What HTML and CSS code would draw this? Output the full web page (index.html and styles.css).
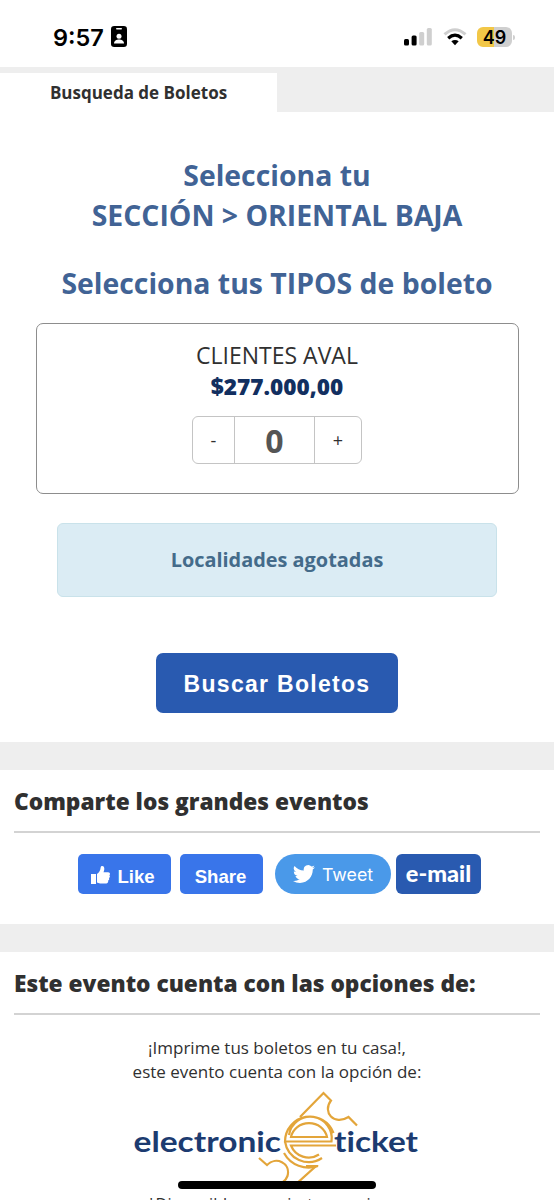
FILE: index.html
```html
<!DOCTYPE html>
<html lang="es">
<head>
<meta charset="utf-8">
<title>Busqueda de Boletos</title>
<link rel="stylesheet" href="styles.css">
</head>
<body>
<header class="status">
  <div class="status-left">
    <span class="clock">9:57</span>
    <svg class="badge" width="16" height="21" viewBox="0 0 16 21"><rect width="16" height="21" rx="3.2"/><rect x="5" y="2" width="6" height="1.6" rx=".8" fill="#fff"/><circle cx="8" cy="10.3" r="2.5" fill="#fff"/><path d="M3 17.6c0-5.4 10-5.4 10 0z" fill="#fff"/></svg>
  </div>
  <div class="status-right">
    <svg width="28" height="18" viewBox="0 0 28 18"><rect x="0" y="11" width="5" height="6.5" rx="1.5"/><rect x="7.6" y="7.5" width="5" height="10" rx="1.5"/><rect x="15.2" y="4" width="5" height="13.5" rx="1.5" fill="#cfcfcf"/><rect x="22.8" y="0" width="5" height="17.5" rx="1.5" fill="#cfcfcf"/></svg>
    <svg width="24" height="18" viewBox="0 0 24 18" fill="none"><path d="M1.500 6.400Q12-3 22.500 6.400" stroke="#cfcfcf" stroke-width="3"/><path d="M5.200 10.200Q12 4.200 18.800 10.200" stroke="#000" stroke-width="3.200"/><path d="M8.300 13.300Q12 10.500 15.700 13.300L12 17.300z" fill="#000"/></svg>
    <div class="battery"><span>49</span></div>
    <i class="battery-tip"></i>
  </div>
</header>
<nav class="tabs"><a class="tab">Busqueda de Boletos</a></nav>
<main class="search">
  <h1>Selecciona tu<br><span class="section-name">SECCIÓN &gt; ORIENTAL BAJA</span></h1>
  <h2>Selecciona tus TIPOS de boleto</h2>
  <section class="ticket">
    <div class="ticket-name">CLIENTES AVAL</div>
    <div class="price">$277.000,00</div>
    <div class="stepper"><button>-</button><output>0</output><button>+</button></div>
  </section>
  <div class="alert">Localidades agotadas</div>
  <button class="submit">Buscar Boletos</button>
</main>
<section class="share">
  <h3>Comparte los grandes eventos</h3>
  <div class="share-row">
    <a class="fb like"><svg width="19" height="20" viewBox="0 0 19 20" fill="#fff"><path d="M0 9h5v10H0zM6 9C8.300 7.500 9.300 5.500 9.700 2.300 9.900.4 13.300.3 13.300 3.500c0 1.700-.4 2.700-.8 3.700h4.600c2.100 0 2.400 2.400 1.200 3.100 1 .8.700 2.300-.4 2.700.7 1 .2 2.300-.8 2.600.4 1.300-.3 2.800-1.900 2.800H9.200c-1.600 0-2.200-.4-3.200-.8z"/></svg><span>Like</span></a>
    <a class="fb share-btn"><span>Share</span></a>
    <a class="tweet"><svg width="22" height="22" viewBox="0 0 24 24" fill="#fff"><path d="M23.950 4.570a10 10 0 0 1-2.820.770 4.960 4.960 0 0 0 2.160-2.720c-.95.550-2 .960-3.120 1.180a4.920 4.920 0 0 0-8.380 4.480C7.690 8.090 4.070 6.130 1.640 3.160a4.920 4.920 0 0 0 1.520 6.570 4.900 4.900 0 0 1-2.230-.610v.060a4.920 4.920 0 0 0 3.950 4.830 5 5 0 0 1-2.210.080 4.940 4.940 0 0 0 4.600 3.420A9.870 9.870 0 0 1 0 19.540a13.990 13.990 0 0 0 7.550 2.210c9.050 0 14-7.500 14-13.990 0-.210 0-.420-.020-.630a9.940 9.940 0 0 0 2.460-2.550z"/></svg><span>Tweet</span></a>
    <a class="email">e-mail</a>
  </div>
</section>
<section class="options">
  <h3>Este evento cuenta con las opciones de:</h3>
  <p class="print">¡Imprime tus boletos en tu casa!,<br>este evento cuenta con la opción de:</p>
  <svg class="logo" width="290" height="100" viewBox="132 1088 290 100">
    <g fill="none" stroke="#e3a53a" stroke-width="2.200">
      <path d="M300 1117L323.500 1093 331 1100.500C322 1112 334 1126 348.500 1117L357 1125.500"/>
      <path d="M259 1158L267 1165C276 1156 291 1163 287.500 1176Q286 1180 283 1182M290 1189.500L316 1166H306"/>
      <path d="M333.500 1133A25 25 0 0 0 285 1141.500H331.500A21.300 21.300 0 0 0 289 1135"/>
      <path d="M285 1141.500A24 24 0 0 0 322 1158"/>
      <path d="M291 1137A18.300 17 0 0 1 327 1137Z"/>
      <path d="M336 1145.500H291A19 19 0 0 0 319 1154.500"/>
      <path d="M284 1153A28 28 0 0 0 318 1166"/>
    </g>
    <g class="logo-word"><text x="133.500" y="1152" textLength="147.500" lengthAdjust="spacingAndGlyphs">electronic</text><text x="334" y="1152" textLength="84" lengthAdjust="spacingAndGlyphs">ticket</text></g>
  </svg>
  <p class="note">*Disponible para ciertas secciones</p>
</section>
<div class="home-bar"></div>
</body>
</html>
```
FILE: styles.css
```css
* { box-sizing: border-box; }
body { margin: 0; height: 1200px; overflow: hidden; position: relative; background: #fff; color: #303030; font-family: "Open Sans", "Noto Sans", sans-serif; }
h1, h2, h3, p { margin: 0; }
button { padding: 0; font: inherit; color: inherit; background: none; border: 0; }
.status { height: 67px; padding: 0 39px 0 53px; display: flex; justify-content: space-between; }
.status-left { display: flex; padding-top: 26px; gap: 7px; }
.clock { padding-top: 1px; font: 600 23.500px/21px Inter, sans-serif; color: #000; width: 51px; white-space: nowrap; }
.status-right { display: flex; align-items: flex-start; padding-top: 28px; }
.status-right svg { margin-right: 10.500px; }
.battery { margin-top: -1px; width: 35px; height: 20px; border-radius: 6px; background: linear-gradient(90deg, #f2c747 50%, #cfcfcf 50%); font: 600 18px/21px Inter, sans-serif; color: #000; text-align: center; }
.battery-tip { width: 2px; height: 5px; margin: 7px 0 0 1px; border-radius: 0 2px 2px 0; background: #cfcfcf; }
.tabs { height: 45px; padding-top: 6px; background: #eee; }
.tab { display: block; width: 277px; height: 39px; background: #fff; font-size: 17px; font-weight: 700; line-height: 39px; text-align: center; }
.search { height: 630px; padding-top: 43px; display: flex; flex-direction: column; align-items: center; }
h1, h2 { color: #416395; font-size: 28.400px; font-weight: 700; line-height: 40px; text-align: center; white-space: nowrap; }
h2 { margin-top: 28px; }
.ticket { width: 483px; height: 171px; margin-top: 20px; padding-top: 15px; border: 1.500px solid #8d8d8d; border-radius: 7px; display: flex; flex-direction: column; align-items: center; }
.ticket-name { font-size: 23px; font-weight: 500; line-height: 32px; }
.price { color: #122f60; font-size: 22.600px; font-weight: 800; line-height: 32px; }
.stepper { width: 170px; height: 48px; margin-top: 13px; display: grid; grid-template: 46px / 41px 81px 1fr; border: 1px solid #c4c4c4; border-radius: 6px; font-size: 18px; }
.stepper output { border: solid #c4c4c4; border-width: 0 1px; color: #555; font-size: 32px; font-weight: 700; line-height: 47px; text-align: center; }
.alert { width: 440px; height: 74px; margin-top: 29px; border: 1px solid #c9e2ea; border-radius: 6px; background: #dbecf4; color: #446b8a; font-size: 19.900px; font-weight: 700; line-height: 72px; text-align: center; }
.submit { width: 242px; height: 60px; margin-top: 56px; padding-top: 1px; border-radius: 7px; background: #295ab0; color: #fff; font: 700 23px/60px "Liberation Sans", Arial, sans-serif; letter-spacing: 1.300px; }
.share, .options { border-top: 28px solid #eee; padding: 0 14px; }
.share { height: 182px; }
h3 { height: 63px; border-bottom: 2px solid #d3d3d3; font-size: 22.700px; font-weight: 800; line-height: 63px; white-space: nowrap; }
.share-row { display: flex; padding: 21px 0 0 64px; color: #fff; font-family: "Liberation Sans", Arial, sans-serif; }
.share-row a { height: 40px; display: flex; align-items: center; justify-content: center; }
.fb { border-radius: 5px; background: #3975ea; font-size: 18.600px; font-weight: 700; }
.fb span { padding-top: 5px; }
.like { width: 93px; padding-right: 3px; gap: 7px; }
.like svg { margin-top: 1px; }
.share-btn { width: 83px; margin-left: 9px; padding-right: 2px; }
.tweet { width: 116px; margin-left: 12px; gap: 7px; border-radius: 20px; background: #4a99e9; font: 17.800px Inter, sans-serif; }
.email { width: 85px; margin-left: 5px; padding-bottom: 2px; border-radius: 6px; background: #295ab0; font: 900 23.500px Lato, sans-serif; }
.options { display: flex; flex-direction: column; align-items: center; }
.options h3 { align-self: stretch; }
.print { margin-top: 21px; font-size: 17px; line-height: 24px; text-align: center; white-space: nowrap; }
.logo { margin-top: 4px; flex-shrink: 0; }
.logo-word { fill: #1c3b70; font: 700 29px Lato, sans-serif; font-variant-ligatures: none; }
.note { margin-top: 4px; font-size: 16.300px; line-height: 24px; white-space: nowrap; }
.home-bar { position: absolute; left: 178px; top: 1181px; width: 198px; height: 8px; border-radius: 4px; background: #000; }
```
